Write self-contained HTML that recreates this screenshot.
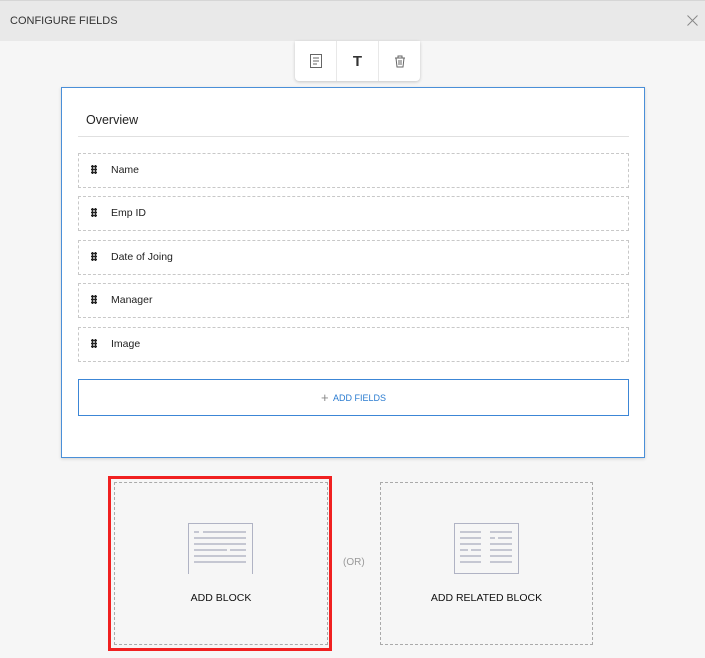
<!DOCTYPE html>
<html><head><style>
*{box-sizing:border-box;margin:0;padding:0}
body{width:705px;height:658px;background:#f6f6f6;font-family:"Liberation Sans",sans-serif;position:relative;overflow:hidden;color:#222}
.hdr{position:absolute;left:0;top:0;width:705px;height:41px;background:#e9e9e9;border-top:1px solid #d6d6d6}
.hdr span{position:absolute;left:10px;top:14px;font-size:11px;color:#333}
.abs{position:absolute}
.tb{left:295px;top:41px;width:125px;height:40px;background:#fff;border-radius:0 0 4px 4px;box-shadow:0 1px 3px rgba(0,0,0,.2);display:flex}
.tb div{flex:1;display:flex;align-items:center;justify-content:center;border-right:1px solid #e8e8e8}
.tb div:last-child{border-right:none}
.card{left:61px;top:87px;width:584px;height:371px;background:#fff;border:1px solid #4a8fd8;box-shadow:0 1px 3px rgba(0,0,0,.15)}
.row{position:absolute;left:78px;width:551px;height:35px;border:1px dashed #c8c8c8;font-size:10.5px;color:#222}
.row i{position:absolute;left:12px;top:11px;width:6px;height:9px;background:radial-gradient(circle,#222 1.3px,transparent 1.5px) 0 0/3px 3px}
.row span{position:absolute;left:32px;top:10px}
.add{left:78px;top:379px;width:551px;height:37px;border:1px solid #3c86d6;font-size:9px;color:#2a7bd0;text-align:center;line-height:35px}
.dash{border:1px dashed #aaa}
.lbl{position:absolute;width:100%;text-align:center;font-size:10.5px;top:109px;color:#111}
</style></head><body>
<div class="hdr"><span>CONFIGURE FIELDS</span>
<svg class="abs" style="left:687px;top:14px" width="11" height="11"><path d="M0.5 0.5L10.5 10.5M10.5 0.5L0.5 10.5" stroke="#888" stroke-width="1"/></svg></div>
<div class="abs tb">
<div><svg width="12" height="14"><rect x="0.5" y="0.5" width="11" height="13" fill="none" stroke="#666"/><path d="M3 4h6M3 7h6M3 10h4" stroke="#666"/></svg></div>
<div><span style="font-weight:bold;font-size:15px;color:#333">T</span></div>
<div><svg width="12" height="13"><path d="M1 3h10M4 3V1h4v2M2 3l1 9h6l1-9M5 5v5M7 5v5" fill="none" stroke="#666"/></svg></div>
</div>
<div class="abs card"></div>
<div class="abs" style="left:86px;top:113px;font-size:12.5px;color:#222">Overview</div>
<div class="abs" style="left:78px;top:136px;width:551px;height:1px;background:#e0e0e0"></div>
<div class="row" style="top:153px"><i></i><span>Name</span></div>
<div class="row" style="top:196px"><i></i><span>Emp ID</span></div>
<div class="row" style="top:240px"><i></i><span>Date of Joing</span></div>
<div class="row" style="top:283px"><i></i><span>Manager</span></div>
<div class="row" style="top:327px"><i></i><span>Image</span></div>
<div class="abs add"><span style="font-size:13px;color:#888;vertical-align:-1px">+</span>&nbsp; ADD FIELDS</div>
<div class="abs" style="left:108px;top:476px;width:224px;height:175px;border:3px solid #f02020"></div>
<div class="abs dash" style="left:114px;top:482px;width:214px;height:163px">
<svg class="abs" style="left:73px;top:40px" width="65" height="51"><path d="M0.5 51V0.5H64.5V51" fill="none" stroke="#b0b3c4"/><g stroke="#a8abbd" stroke-width="1.2"><path d="M6 9h5M15 9h43M6 15h52M6 21h52M6 27h33M42 27h16M6 33h52M6 39h52"/></g></svg>
<div class="lbl">ADD BLOCK</div></div>
<div class="abs" style="left:343px;top:557px;font-size:10px;color:#999">(OR)</div>
<div class="abs dash" style="left:380px;top:482px;width:213px;height:163px">
<svg class="abs" style="left:73px;top:40px" width="65" height="51"><path d="M0.5 51V0.5H64.5V51M0.5 50.5H64.5" fill="none" stroke="#b0b3c4"/><g stroke="#a8abbd" stroke-width="1.2"><path d="M6 9h21M36 9h22M6 15h21M36 15h5M44 15h14M6 21h21M36 21h22M6 27h8M17 27h10M36 27h22M6 33h21M36 33h22M6 39h21M36 39h22"/></g></svg>
<div class="lbl">ADD RELATED BLOCK</div></div>
</body></html>
